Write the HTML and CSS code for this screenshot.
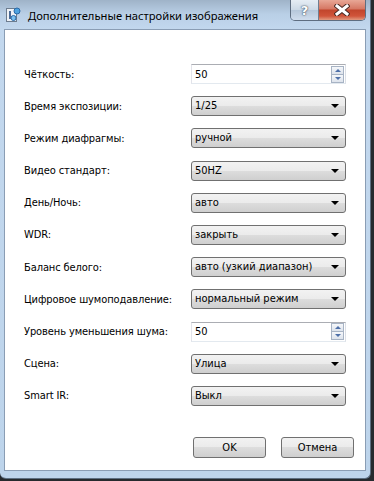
FILE: index.html
```html
<!DOCTYPE html>
<html lang="ru">
<head>
  <meta charset="UTF-8" />
  <title>Дополнительные настройки изображения</title>
  <link rel="stylesheet" href="styles.css">
</head>
<body>
  <div class="window">
    <div class="titlebar">
      <svg class="app-icon" width="16" height="16" viewBox="0 0 16 16">
        <rect x="1.5" y="1.5" width="10" height="13" fill="#eef2f7" stroke="#6d7c8e"/>
        <rect x="4" y="4" width="2" height="8" fill="#4a6a95"/>
        <circle cx="12" cy="4" r="3" fill="#4fa3e0" stroke="#2a6aa8"/>
        <circle cx="8.5" cy="11" r="2.5" fill="#7cc1ef" stroke="#2a6aa8"/>
      </svg>
      <span class="title">Дополнительные настройки изображения</span>
      <div class="caption-buttons">
        <div class="cap-btn help">?</div>
        <div class="cap-btn close">
          <svg width="16" height="12" viewBox="0 0 16 12">
            <path d="M3 2 L13 10 M13 2 L3 10" stroke="#4a2a25" stroke-width="5" fill="none" stroke-linecap="square"/>
            <path d="M3 2 L13 10 M13 2 L3 10" stroke="#fff" stroke-width="3" fill="none" stroke-linecap="square"/>
          </svg>
        </div>
      </div>
    </div>

    <div class="client">
      <div class="settings">
        <label>Чёткость:</label>
        <div class="spin"><span>50</span><div class="spin-arrows"><i class="up"></i><i class="down"></i></div></div>

        <label>Время экспозиции:</label>
        <div class="combo">1/25</div>

        <label>Режим диафрагмы:</label>
        <div class="combo">ручной</div>

        <label>Видео стандарт:</label>
        <div class="combo">50HZ</div>

        <label>День/Ночь:</label>
        <div class="combo">авто</div>

        <label>WDR:</label>
        <div class="combo">закрыть</div>

        <label>Баланс белого:</label>
        <div class="combo">авто (узкий диапазон)</div>

        <label>Цифровое шумоподавление:</label>
        <div class="combo">нормальный режим</div>

        <label>Уровень уменьшения шума:</label>
        <div class="spin"><span>50</span><div class="spin-arrows"><i class="up"></i><i class="down"></i></div></div>

        <label>Сцена:</label>
        <div class="combo">Улица</div>

        <label>Smart IR:</label>
        <div class="combo">Выкл</div>
      </div>

      <div class="actions">
        <button class="btn">OK</button>
        <button class="btn">Отмена</button>
      </div>
    </div>
  </div>
</body>
</html>
```

FILE: styles.css
```css
body {
  margin: 0;
  padding: 0;
  background-color: #262a2e;
  font-family: "DejaVu Sans Condensed", "Liberation Sans", sans-serif;
  font-size: 11px;
  color: #000;
}

.window {
  width: 371px;
  height: 479px;
  box-sizing: border-box;
  padding: 0 4px 7px 4px;
  display: flex;
  flex-direction: column;
  background: linear-gradient(to bottom, #9fb3c8 0px, #b9cfe6 14px, #c3d8ee 30px, #bdd4eb 100%);
  border-right: 1px solid #5d6f82;
  border-bottom: 1px solid #5d6f82;
  border-radius: 0 0 6px 6px;
}

/* title bar */
.titlebar {
  height: 29px;
  display: flex;
  align-items: center;
  padding-left: 1px;
}

.app-icon {
  margin-top: 1px;
}

.title {
  margin-left: 7px;
  margin-top: 1px;
  font-family: "Noto Sans", sans-serif;
  font-size: 11.2px;
  color: #000;
  flex: 1;
}

.caption-buttons {
  align-self: flex-start;
  display: flex;
  height: 20px;
  border: 1px solid #5e6d80;
  border-top: none;
  border-radius: 0 0 5px 5px;
  overflow: hidden;
}

.cap-btn {
  height: 20px;
  display: flex;
  align-items: center;
  justify-content: center;
}

.help {
  width: 27px;
  background: linear-gradient(to bottom, #e6edf4 0%, #ccd9e6 50%, #b6c7da 51%, #d0dded 100%);
  border-right: 1px solid #6f7e90;
  font-family: "DejaVu Sans", sans-serif;
  font-weight: bold;
  font-size: 13px;
  color: #fff;
  text-shadow: 0 0 2px #39495c, 0 0 1px #39495c;
}

.close {
  width: 46px;
  background: linear-gradient(to bottom, #e8a796 0%, #d57763 45%, #c1452c 50%, #d0543a 80%, #e19a80 100%);
}

/* client area */
.client {
  flex: 1;
  background-color: #fff;
  border: 1px solid #8a9db4;
  display: flex;
  flex-direction: column;
  padding: 34px 11px 0 19px;
}

.settings {
  display: grid;
  grid-template-columns: 167px 155px;
  grid-auto-rows: 20px;
  row-gap: 12.2px;
  align-items: center;
}

.settings label {
  white-space: nowrap;
  letter-spacing: -0.1px;
}

.combo {
  height: 20px;
  box-sizing: border-box;
  border: 1px solid #707070;
  border-radius: 3px;
  background: linear-gradient(to bottom, #f2f2f2 0%, #ebebeb 49%, #dddddd 50%, #cfcfcf 100%);
  padding: 0 0 0 3px;
  line-height: 18px;
  position: relative;
  white-space: nowrap;
}

.combo::after {
  content: "";
  position: absolute;
  right: 6px;
  top: 7px;
  border-left: 4px solid transparent;
  border-right: 4px solid transparent;
  border-top: 4px solid #000;
}

.spin {
  height: 20px;
  box-sizing: border-box;
  border: 1px solid #abadb3;
  border-left-color: #e2e3ea;
  border-right-color: #dbdfe6;
  border-bottom-color: #e3e9ef;
  background-color: #fff;
  display: flex;
  align-items: center;
  justify-content: space-between;
  padding: 0 1px 0 3px;
}

.spin-arrows {
  display: flex;
  flex-direction: column;
  width: 13px;
  height: 17px;
}

.spin-arrows i {
  flex: 1;
  border: 1px solid #a7b3c4;
  background: linear-gradient(to bottom, #f5f7fa, #dde3ec);
  position: relative;
}

.spin-arrows i + i {
  border-top: none;
}

.spin-arrows i::after {
  content: "";
  position: absolute;
  left: 3px;
  top: 2px;
  border-left: 3px solid transparent;
  border-right: 3px solid transparent;
}

.spin-arrows .up::after {
  border-bottom: 3px solid #4d6fa8;
}

.spin-arrows .down::after {
  border-top: 3px solid #4d6fa8;
}

/* bottom buttons */
.actions {
  margin-top: auto;
  margin-bottom: 12px;
  display: flex;
  justify-content: flex-end;
  gap: 15px;
}

.btn {
  width: 73px;
  height: 21px;
  font-family: "DejaVu Sans Condensed", "Liberation Sans", sans-serif;
  font-size: 11px;
  color: #000;
  border: 1px solid #707070;
  border-radius: 3px;
  background: linear-gradient(to bottom, #f2f2f2 0%, #ebebeb 49%, #dddddd 50%, #cfcfcf 100%);
  padding: 0;
}
```
